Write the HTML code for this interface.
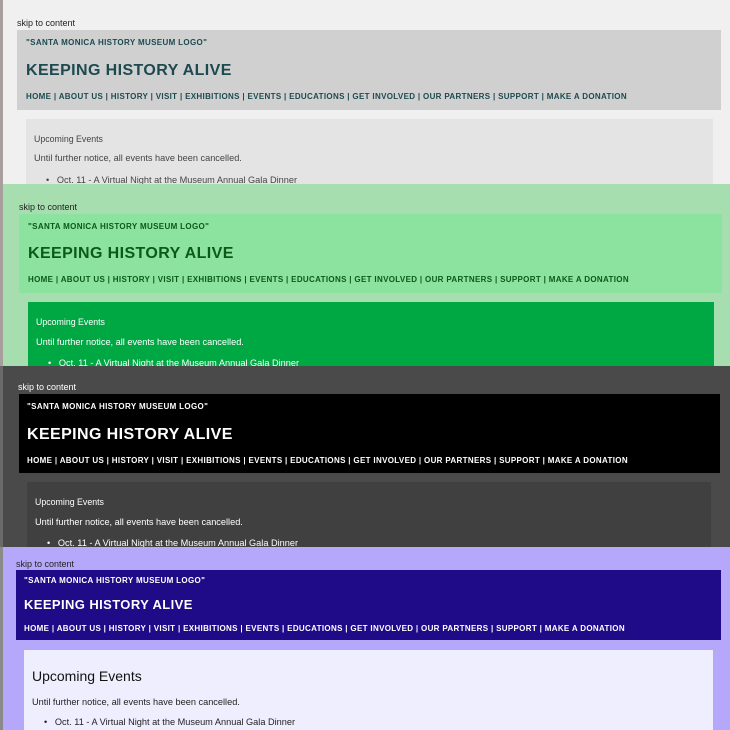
<!DOCTYPE html>
<html><head><meta charset="utf-8"><style>
*{margin:0;padding:0;box-sizing:border-box}
body{width:730px;height:730px;overflow:hidden;position:relative;font-family:"Liberation Sans",sans-serif;background:#f0f0f0}
.p{position:absolute;left:0;width:730px;overflow:hidden}
.a{position:absolute;white-space:nowrap}
.sk{font-size:9px}
.hd{position:absolute}
.lg{font-size:8px;font-weight:bold;letter-spacing:0.35px}
.h1{font-size:16px;font-weight:bold;letter-spacing:0.4px}
.nv{font-size:8px;font-weight:bold;letter-spacing:0.33px}
.ct{position:absolute}
.t1{font-size:8.8px}
.t2{font-size:9.2px}
</style></head><body>

<!-- panel 1 -->
<div class="p" style="top:0;height:184px;background:#f0f0f0;border-left:3px solid #a89e9e">
<div class="a sk" style="left:14px;top:18px;color:#222">skip to content</div>
<div class="hd" style="left:14px;top:30px;width:704px;height:80px;background:#d0d0d0"></div>
<div class="a lg" style="left:23px;top:38px;color:#1c4a4f">"SANTA MONICA HISTORY MUSEUM LOGO"</div>
<div class="a h1" style="left:23px;top:62px;color:#1c4a4f">KEEPING HISTORY ALIVE</div>
<div class="a nv" style="left:23px;top:92px;color:#1c4a4f">HOME | ABOUT US | HISTORY | VISIT | EXHIBITIONS | EVENTS | EDUCATIONS | GET INVOLVED | OUR PARTNERS | SUPPORT | MAKE A DONATION</div>
<div class="ct" style="left:23px;top:119px;width:687px;height:70px;background:#e4e4e4"></div>
<div class="a t1" style="left:31px;top:134px;color:#444">Upcoming Events</div>
<div class="a t2" style="left:31px;top:153px;color:#444">Until further notice, all events have been cancelled.</div>
<div class="a t2" style="left:43px;top:175px;color:#444">•&nbsp;&nbsp; Oct. 11 - A Virtual Night at the Museum Annual Gala Dinner</div>
</div>

<!-- panel 2 -->
<div class="p" style="top:184px;height:182px;background:#a6deb0;border-left:3px solid #a89e9e">
<div class="a sk" style="left:16px;top:18px;color:#222">skip to content</div>
<div class="hd" style="left:16px;top:30px;width:703px;height:79px;background:#8ce29f"></div>
<div class="a lg" style="left:25px;top:38px;color:#0b5a18">"SANTA MONICA HISTORY MUSEUM LOGO"</div>
<div class="a h1" style="left:25px;top:61px;color:#0b5a18">KEEPING HISTORY ALIVE</div>
<div class="a nv" style="left:25px;top:91px;color:#0b5a18">HOME | ABOUT US | HISTORY | VISIT | EXHIBITIONS | EVENTS | EDUCATIONS | GET INVOLVED | OUR PARTNERS | SUPPORT | MAKE A DONATION</div>
<div class="ct" style="left:25px;top:118px;width:686px;height:70px;background:#00a844"></div>
<div class="a t1" style="left:33px;top:133px;color:#fff">Upcoming Events</div>
<div class="a t2" style="left:33px;top:153px;color:#fff">Until further notice, all events have been cancelled.</div>
<div class="a t2" style="left:45px;top:174px;color:#fff">•&nbsp;&nbsp; Oct. 11 - A Virtual Night at the Museum Annual Gala Dinner</div>
</div>

<!-- panel 3 -->
<div class="p" style="top:366px;height:181px;background:#4a4a4a;border-left:3px solid #6a6a6a">
<div class="a sk" style="left:15px;top:16px;color:#fff">skip to content</div>
<div class="hd" style="left:16px;top:28px;width:701px;height:79px;background:#000"></div>
<div class="a lg" style="left:24px;top:36px;color:#fff">"SANTA MONICA HISTORY MUSEUM LOGO"</div>
<div class="a h1" style="left:24px;top:60px;color:#fff">KEEPING HISTORY ALIVE</div>
<div class="a nv" style="left:24px;top:90px;color:#fff">HOME | ABOUT US | HISTORY | VISIT | EXHIBITIONS | EVENTS | EDUCATIONS | GET INVOLVED | OUR PARTNERS | SUPPORT | MAKE A DONATION</div>
<div class="ct" style="left:24px;top:116px;width:684px;height:70px;background:#404040"></div>
<div class="a t1" style="left:32px;top:131px;color:#fff">Upcoming Events</div>
<div class="a t2" style="left:32px;top:151px;color:#fff">Until further notice, all events have been cancelled.</div>
<div class="a t2" style="left:44px;top:172px;color:#fff">•&nbsp;&nbsp; Oct. 11 - A Virtual Night at the Museum Annual Gala Dinner</div>
</div>

<!-- panel 4 -->
<div class="p" style="top:547px;height:183px;background:#b5a8fb;border-left:3px solid #8a8a8a">
<div class="a sk" style="left:13px;top:12px;color:#222">skip to content</div>
<div class="hd" style="left:13px;top:23px;width:705px;height:70px;background:#1f0a87"></div>
<div class="a lg" style="left:21px;top:29px;color:#fff">"SANTA MONICA HISTORY MUSEUM LOGO"</div>
<div class="a h1" style="left:21px;top:50px;color:#fff;font-size:13px">KEEPING HISTORY ALIVE</div>
<div class="a nv" style="left:21px;top:77px;color:#fff">HOME | ABOUT US | HISTORY | VISIT | EXHIBITIONS | EVENTS | EDUCATIONS | GET INVOLVED | OUR PARTNERS | SUPPORT | MAKE A DONATION</div>
<div class="ct" style="left:21px;top:103px;width:689px;height:90px;background:#efeeff"></div>
<div class="a" style="left:29px;top:121px;color:#111;font-size:14px">Upcoming Events</div>
<div class="a t2" style="left:29px;top:150px;color:#222">Until further notice, all events have been cancelled.</div>
<div class="a t2" style="left:41px;top:170px;color:#222">•&nbsp;&nbsp; Oct. 11 - A Virtual Night at the Museum Annual Gala Dinner</div>
</div>

</body></html>
